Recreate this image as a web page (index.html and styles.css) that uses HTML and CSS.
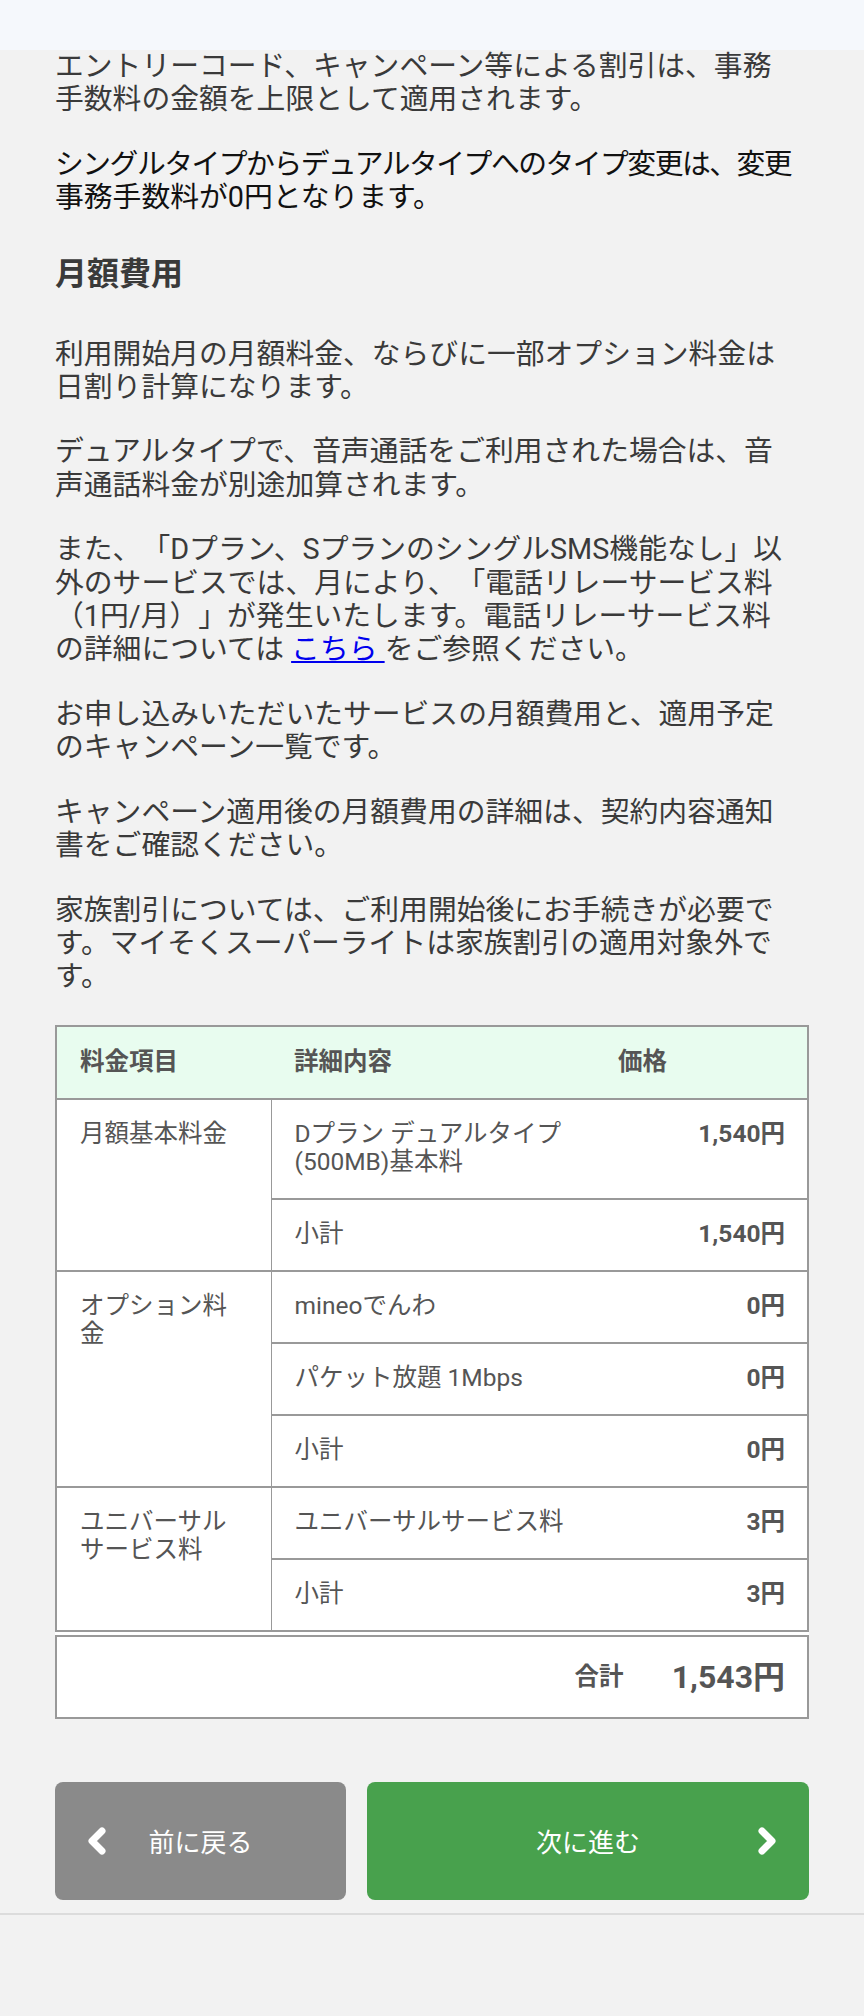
FILE: index.html
```html
<!DOCTYPE html>
<html lang="ja">
<head>
  <meta charset="utf-8">
  <title>月額費用</title>
  <link rel="stylesheet" href="styles.css">
</head>
<body>
  <header class="topbar"></header>

  <main class="content">
    <p class="note">エントリーコード、キャンペーン等による割引は、事務<br>
      手数料の金額を上限として適用されます。</p>
    <p class="note note-strong"><span class="tight">シングルタイプからデュアルタイプへのタイプ変更は、変更</span><br>
      事務手数料が0円となります。</p>

    <h2 class="section-title">月額費用</h2>

    <p class="note">利用開始月の月額料金、ならびに一部オプション料金は<br>
      日割り計算になります。</p>
    <p class="note">デュアルタイプで、音声通話をご利用された場合は、音<br>
      声通話料金が別途加算されます。</p>
    <p class="note">また、「Dプラン、SプランのシングルSMS機能なし」以<br>
      外のサービスでは、月により、「電話リレーサービス料<br>
      （1円/月）」が発生いたします。電話リレーサービス料<br>
      の詳細については <a href="#">こちら </a>をご参照ください。</p>
    <p class="note">お申し込みいただいたサービスの月額費用と、適用予定<br>
      のキャンペーン一覧です。</p>
    <p class="note">キャンペーン適用後の月額費用の詳細は、契約内容通知<br>
      書をご確認ください。</p>
    <p class="note">家族割引については、ご利用開始後にお手続きが必要で<br>
      す。マイそくスーパーライトは家族割引の適用対象外で<br>
      す。</p>

    <table class="fee-table">
      <colgroup>
        <col class="col-item">
        <col class="col-detail">
        <col>
      </colgroup>
      <thead>
        <tr>
          <th>料金項目</th>
          <th>詳細内容</th>
          <th>価格</th>
        </tr>
      </thead>
      <tbody>
        <tr>
          <td class="item" rowspan="2">月額基本料金</td>
          <td class="detail">Dプラン デュアルタイプ(500MB)基本料</td>
          <td class="price">1,540円</td>
        </tr>
        <tr>
          <td class="detail">小計</td>
          <td class="price">1,540円</td>
        </tr>
        <tr>
          <td class="item" rowspan="3">オプション料金</td>
          <td class="detail">mineoでんわ</td>
          <td class="price">0円</td>
        </tr>
        <tr>
          <td class="detail">パケット放題 1Mbps</td>
          <td class="price">0円</td>
        </tr>
        <tr>
          <td class="detail">小計</td>
          <td class="price">0円</td>
        </tr>
        <tr>
          <td class="item" rowspan="2">ユニバーサルサービス料</td>
          <td class="detail">ユニバーサルサービス料</td>
          <td class="price">3円</td>
        </tr>
        <tr>
          <td class="detail">小計</td>
          <td class="price">3円</td>
        </tr>
      </tbody>
      <tfoot>
        <tr>
          <td colspan="3" class="total">
            <span class="total-label">合計</span>
            <span class="total-price">1,543円</span>
          </td>
        </tr>
      </tfoot>
    </table>

    <div class="nav-buttons">
      <button class="button button-back">
        <svg class="chevron" viewBox="0 0 20 28" width="20" height="28">
          <polyline points="15,4 5,14 15,24" />
        </svg>
        <span class="button-label">前に戻る</span>
        <span></span>
      </button>
      <button class="button button-next">
        <span></span>
        <span class="button-label">次に進む</span>
        <svg class="chevron chevron-right" viewBox="0 0 20 28" width="20" height="28">
          <polyline points="5,4 15,14 5,24" />
        </svg>
      </button>
    </div>
  </main>

  <div class="page-end"></div>
</body>
</html>
```

FILE: styles.css
```css
body {
  margin: 0;
  background-color: #f2f2f2;
  color: #3a3a3a;
  font-family: Roboto, "Noto Sans CJK JP", sans-serif;
}

/* Header band */
.topbar {
  height: 50px;
  background-color: #f5f8fc;
}

.content {
  padding: 0 55px;
}

/* Notes above the table */
.note {
  margin: 0 0 31px;
  font-size: 28.8px;
  line-height: 33.4px;
  white-space: nowrap;
  text-spacing-trim: space-all;
}

.note-strong {
  color: #111;
}

.tight {
  letter-spacing: -1.5px;
}

.note a {
  color: #0000ee;
  text-decoration: underline;
}

.section-title {
  margin: 39px 0 44px;
  font-size: 32px;
  line-height: 40px;
  font-weight: bold;
  color: #3a3a3a;
}

/* Fee table */
.fee-table {
  width: 100%;
  margin-top: 29px;
  border-collapse: collapse;
  background-color: #fff;
  border: 2px solid #999;
  color: #555;
  font-size: 24.5px;
  line-height: 28px;
}

.col-item {
  width: 215px;
}

.col-detail {
  width: 324px;
}

.fee-table th {
  padding: 21px 23px 22px;
  background-color: #e8fcef;
  text-align: left;
  font-weight: bold;
  border-bottom: 2px solid #999;
}

.fee-table td {
  padding: 20px 23px 22px;
  vertical-align: top;
  border-top: 2px solid #999;
}

.fee-table .item {
  border-right: 1px solid #999;
}

.fee-table .price {
  padding-right: 22px;
  text-align: right;
  font-weight: bold;
  white-space: nowrap;
}

.fee-table .total {
  padding: 22px 22px 22px 23px;
  text-align: right;
  vertical-align: middle;
  border-top: 7px double #999;
}

.total-label {
  font-size: 24.5px;
  font-weight: bold;
  vertical-align: middle;
}

.total-price {
  margin-left: 42px;
  font-size: 32px;
  line-height: 36px;
  font-weight: bold;
  vertical-align: middle;
}

/* Back / next buttons */
.nav-buttons {
  display: flex;
  gap: 21px;
  margin-top: 63px;
}

.button {
  display: grid;
  grid-template-columns: 1fr auto 1fr;
  align-items: center;
  height: 118px;
  padding: 0 32px;
  border: none;
  border-radius: 8px;
  color: #fff;
  font-family: Roboto, "Noto Sans CJK JP", sans-serif;
  font-size: 26px;
  cursor: pointer;
}

.button-back {
  width: 291px;
  background-color: #8a8a8a;
}

.button-next {
  flex: 1;
  background-color: #48a14d;
}

.chevron polyline {
  fill: none;
  stroke: #fff;
  stroke-width: 7;
  stroke-linecap: round;
  stroke-linejoin: round;
}

.chevron-right {
  justify-self: end;
}

.page-end {
  margin-top: 13px;
  border-top: 2px solid #dcdcdc;
}
```
